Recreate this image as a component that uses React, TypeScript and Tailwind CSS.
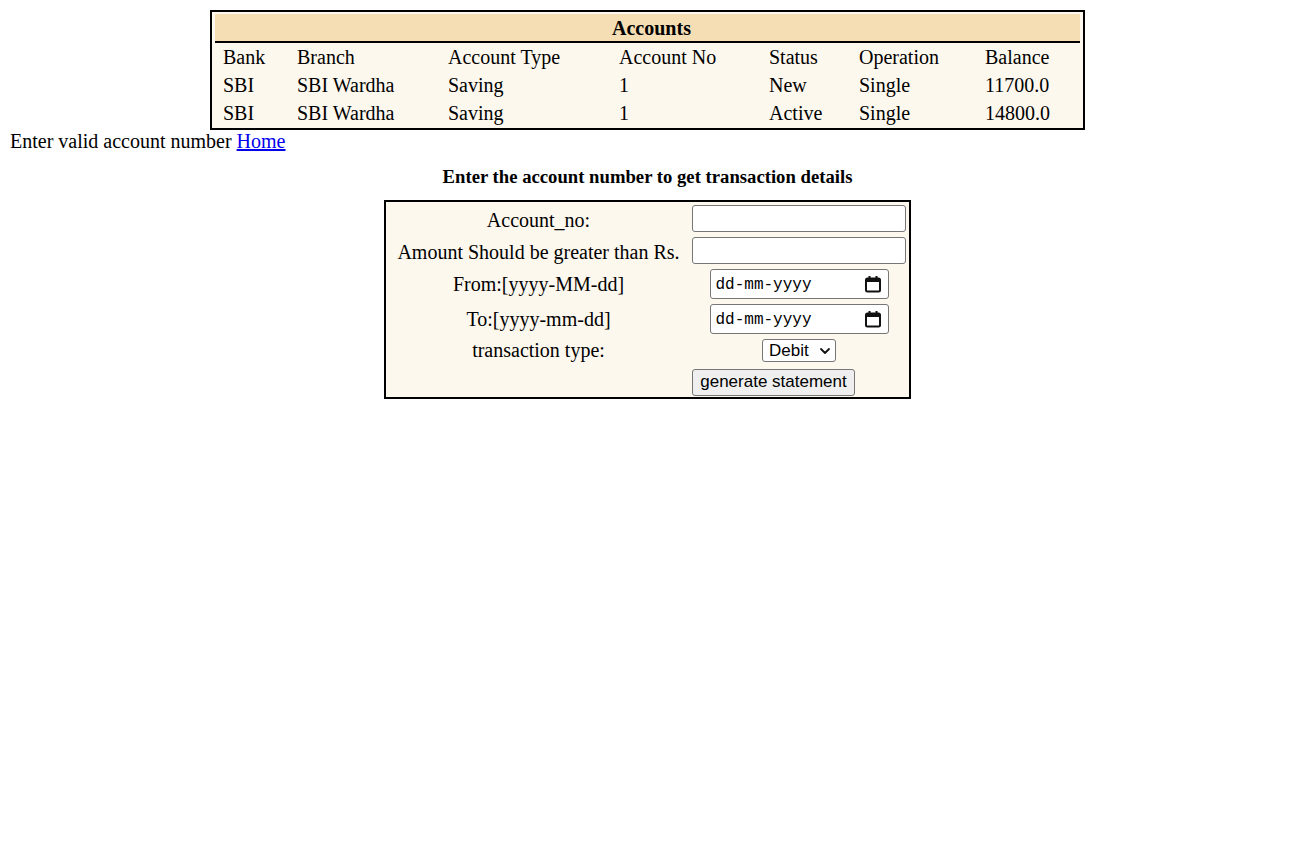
import React from "react";

const serif = { fontFamily: '"Liberation Serif", "Times New Roman", serif' };

function CalendarIcon() {
  return (
    <svg width="18" height="18" viewBox="0 0 18 18" fill="none">
      <rect x="2" y="3.5" width="14" height="13" rx="1.5" stroke="#111" strokeWidth="2" />
      <rect x="2" y="3.5" width="14" height="3.5" fill="#111" />
      <rect x="4.5" y="1" width="2" height="3" fill="#111" />
      <rect x="11.5" y="1" width="2" height="3" fill="#111" />
    </svg>
  );
}

function DateBox() {
  return (
    <div className="flex items-center justify-between w-[179px] h-[30px] border border-[#767676] rounded-[3px] bg-white pl-[5px] pr-[6px]">
      <span className="text-[16px] text-black pt-[1px]" style={{ fontFamily: '"Liberation Mono", "DejaVu Sans Mono", monospace' }}>
        dd-mm-yyyy
      </span>
      <CalendarIcon />
    </div>
  );
}

const cols = "grid grid-cols-[74px_151px_171px_150px_90px_126px_103px]";

const rows = [
  ["Bank", "Branch", "Account Type", "Account No", "Status", "Operation", "Balance"],
  ["SBI", "SBI Wardha", "Saving", "1", "New", "Single", "11700.0"],
  ["SBI", "SBI Wardha", "Saving", "1", "Active", "Single", "14800.0"],
];

export default function App() {
  return (
    <div className="min-h-[842px] bg-white text-black px-[10px] pt-[10px] text-[20px]" style={serif}>
      <div className="flex justify-center">
        <div className="w-[875px] border-2 border-black bg-[#fdf8ee] px-[3px] pt-[2px] pb-[1px]">
          <div className="h-[27px] bg-[#f5deb3] flex items-center justify-center font-bold text-[20px] pl-[8px]">
            Accounts
          </div>
          <div className="h-[2px] bg-black" />
          {rows.map((r, i) => (
            <div key={i} className={`${cols} h-[28px] items-center`}>
              {r.map((c, j) => (
                <div key={j} className="pl-[8px] leading-[23px] whitespace-nowrap">
                  {c}
                </div>
              ))}
            </div>
          ))}
        </div>
      </div>

      <div className="leading-[23px]">
        Enter valid account number{" "}
        <a href="#" className="text-[#0000ee] underline">
          Home
        </a>
      </div>

      <div className="mt-[13px] text-center font-bold text-[18.7px] leading-[21px]">
        Enter the account number to get transaction details
      </div>

      <div className="flex justify-center mt-[13px]">
        <div className="w-[527px] border-2 border-black bg-[#fdf8ee] p-[3px] flex flex-col gap-[5px]">
          <div className="flex items-center h-[27px] gap-[4px]">
            <div className="w-[299px] text-center leading-[23px] pt-[3px]">Account_no:</div>
            <div className="w-[214px] h-[27px] border border-[#767676] rounded-[3px] bg-white" />
          </div>
          <div className="flex items-center h-[27px] gap-[4px]">
            <div className="w-[299px] text-center leading-[23px] whitespace-nowrap pt-[3px]">Amount Should be greater than Rs.</div>
            <div className="w-[214px] h-[27px] border border-[#767676] rounded-[3px] bg-white" />
          </div>
          <div className="flex items-center h-[30px] gap-[4px]">
            <div className="w-[299px] text-center leading-[23px]">From:[yyyy-MM-dd]</div>
            <div className="w-[214px] flex justify-center">
              <DateBox />
            </div>
          </div>
          <div className="flex items-center h-[30px] gap-[4px]">
            <div className="w-[299px] text-center leading-[23px]">To:[yyyy-mm-dd]</div>
            <div className="w-[214px] flex justify-center">
              <DateBox />
            </div>
          </div>
          <div className="flex items-center h-[23px] gap-[4px]">
            <div className="w-[299px] text-center leading-[23px]">transaction type:</div>
            <div className="w-[214px] flex justify-center">
              <div
                className="flex items-center justify-between w-[74px] h-[23px] border border-[#767676] rounded-[3px] bg-white pl-[6px] pr-[4px] text-[17px]"
                style={{ fontFamily: '"Liberation Sans", Arial, sans-serif' }}
              >
                <span>Debit</span>
                <svg width="12" height="12" viewBox="0 0 12 12" fill="none">
                  <path d="M2 4l4 4 4-4" stroke="#111" strokeWidth="1.8" strokeLinecap="round" strokeLinejoin="round" />
                </svg>
              </div>
            </div>
          </div>
          <div className="flex items-center h-[27px] gap-[4px]">
            <div className="w-[299px]" />
            <div className="w-[214px]">
              <button
                className="w-[163px] h-[27px] border border-[#767676] rounded-[3px] bg-[#efefef] text-[17px] text-black leading-[20px]"
                style={{ fontFamily: '"Liberation Sans", Arial, sans-serif' }}
              >
                generate statement
              </button>
            </div>
          </div>
        </div>
      </div>
    </div>
  );
}
